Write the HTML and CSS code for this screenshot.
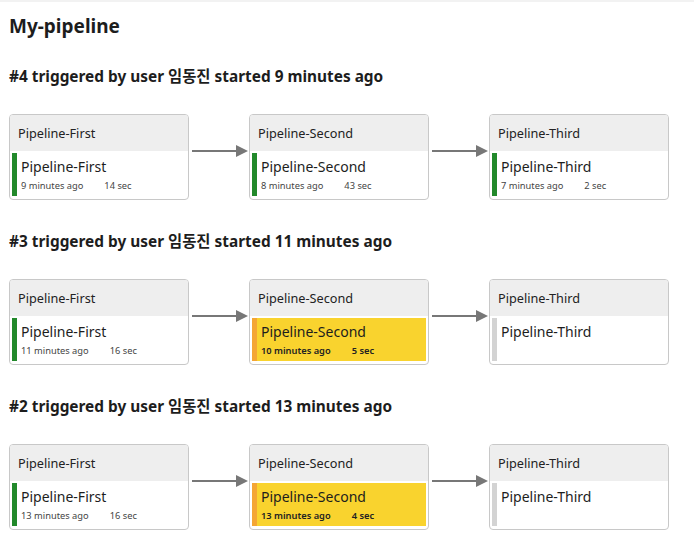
FILE: index.html
```html
<!DOCTYPE html>
<html>
<head>
<meta charset="utf-8">
<link rel="stylesheet" href="styles.css">
</head>
<body>
<div class="page">
  <h1 class="title">My-pipeline</h1>

  <section class="run">
    <h2 class="run-head">#4 triggered by user 임동진 started 9 minutes ago</h2>
    <div class="stages">
      <div class="stage">
        <div class="stage-head">Pipeline-First</div>
        <div class="stage-body"><div class="job ok"><span class="bar"></span><div class="info"><div class="name">Pipeline-First</div><div class="meta"><span>9 minutes ago</span><span class="dur">14 sec</span></div></div></div></div>
      </div>
      <div class="arrow"><svg width="57" height="14" viewBox="0 0 57 14"><line x1="0" y1="7" x2="46" y2="7" stroke="#777" stroke-width="2"/><polygon points="44,1 56,7 44,13" fill="#777"/></svg></div>
      <div class="stage">
        <div class="stage-head">Pipeline-Second</div>
        <div class="stage-body"><div class="job ok"><span class="bar"></span><div class="info"><div class="name">Pipeline-Second</div><div class="meta"><span>8 minutes ago</span><span class="dur">43 sec</span></div></div></div></div>
      </div>
      <div class="arrow"><svg width="57" height="14" viewBox="0 0 57 14"><line x1="0" y1="7" x2="46" y2="7" stroke="#777" stroke-width="2"/><polygon points="44,1 56,7 44,13" fill="#777"/></svg></div>
      <div class="stage">
        <div class="stage-head">Pipeline-Third</div>
        <div class="stage-body"><div class="job ok"><span class="bar"></span><div class="info"><div class="name">Pipeline-Third</div><div class="meta"><span>7 minutes ago</span><span class="dur">2 sec</span></div></div></div></div>
      </div>
    </div>
  </section>

  <section class="run">
    <h2 class="run-head">#3 triggered by user 임동진 started 11 minutes ago</h2>
    <div class="stages">
      <div class="stage">
        <div class="stage-head">Pipeline-First</div>
        <div class="stage-body"><div class="job ok"><span class="bar"></span><div class="info"><div class="name">Pipeline-First</div><div class="meta"><span>11 minutes ago</span><span class="dur">16 sec</span></div></div></div></div>
      </div>
      <div class="arrow"><svg width="57" height="14" viewBox="0 0 57 14"><line x1="0" y1="7" x2="46" y2="7" stroke="#777" stroke-width="2"/><polygon points="44,1 56,7 44,13" fill="#777"/></svg></div>
      <div class="stage">
        <div class="stage-head">Pipeline-Second</div>
        <div class="stage-body"><div class="job warn"><span class="bar"></span><div class="info"><div class="name">Pipeline-Second</div><div class="meta"><span>10 minutes ago</span><span class="dur">5 sec</span></div></div></div></div>
      </div>
      <div class="arrow"><svg width="57" height="14" viewBox="0 0 57 14"><line x1="0" y1="7" x2="46" y2="7" stroke="#777" stroke-width="2"/><polygon points="44,1 56,7 44,13" fill="#777"/></svg></div>
      <div class="stage">
        <div class="stage-head">Pipeline-Third</div>
        <div class="stage-body"><div class="job none"><span class="bar"></span><div class="info"><div class="name">Pipeline-Third</div></div></div></div>
      </div>
    </div>
  </section>

  <section class="run">
    <h2 class="run-head">#2 triggered by user 임동진 started 13 minutes ago</h2>
    <div class="stages">
      <div class="stage">
        <div class="stage-head">Pipeline-First</div>
        <div class="stage-body"><div class="job ok"><span class="bar"></span><div class="info"><div class="name">Pipeline-First</div><div class="meta"><span>13 minutes ago</span><span class="dur">16 sec</span></div></div></div></div>
      </div>
      <div class="arrow"><svg width="57" height="14" viewBox="0 0 57 14"><line x1="0" y1="7" x2="46" y2="7" stroke="#777" stroke-width="2"/><polygon points="44,1 56,7 44,13" fill="#777"/></svg></div>
      <div class="stage">
        <div class="stage-head">Pipeline-Second</div>
        <div class="stage-body"><div class="job warn"><span class="bar"></span><div class="info"><div class="name">Pipeline-Second</div><div class="meta"><span>13 minutes ago</span><span class="dur">4 sec</span></div></div></div></div>
      </div>
      <div class="arrow"><svg width="57" height="14" viewBox="0 0 57 14"><line x1="0" y1="7" x2="46" y2="7" stroke="#777" stroke-width="2"/><polygon points="44,1 56,7 44,13" fill="#777"/></svg></div>
      <div class="stage">
        <div class="stage-head">Pipeline-Third</div>
        <div class="stage-body"><div class="job none"><span class="bar"></span><div class="info"><div class="name">Pipeline-Third</div></div></div></div>
      </div>
    </div>
  </section>
</div>
</body>
</html>
```

FILE: styles.css
```css
html, body {
  margin: 0;
  padding: 0;
  background: #ffffff;
}
body {
  font-family: "Noto Sans", "Noto Sans CJK KR", sans-serif;
  color: #222;
}
.page {
  border-top: 2px solid #f2f2f2;
  padding: 10px 9px 0 9px;
}
.title {
  margin: 0;
  font-size: 19px;
  font-weight: 700;
  line-height: 28px;
  color: #1d1d1d;
}
.run-head {
  margin: 27px 0 27px 0;
  font-size: 15.4px;
  font-weight: 700;
  line-height: 20px;
  color: #1d1d1d;
}
.run + .run .run-head {
  margin-top: 32px;
}
.stages {
  display: flex;
  align-items: flex-start;
}
.stage {
  width: 178px;
  border: 1px solid #c8c8c8;
  border-radius: 4px;
  overflow: hidden;
  background: #fff;
}
.stage-head {
  height: 36px;
  background: #eeeeee;
  font-size: 12.7px;
  line-height: 37px;
  padding-left: 8px;
  color: #222;
}
.stage-body {
  padding: 2px 2px 3px 2px;
  height: 43px;
}
.job {
  display: flex;
  height: 43px;
}
.job .bar {
  width: 5px;
  flex: none;
}
.job.ok .bar { background: #22892b; }
.job.warn { background: #f9d32e; }
.job.warn .bar { background: #f4a634; }
.job.none .bar { background: #d3d3d3; }
.info {
  padding-left: 4px;
}
.name {
  font-size: 14px;
  line-height: 18px;
  margin-top: 5px;
  color: #1d1d1d;
}
.meta {
  font-size: 9.3px;
  line-height: 12px;
  margin-top: 4px;
  color: #444;
  display: flex;
}
.job.warn .meta {
  color: #222;
  font-weight: 600;
}
.dur {
  margin-left: 21px;
}
.arrow {
  width: 60px;
  padding-left: 3px;
  margin-top: 30px;
  box-sizing: border-box;
  line-height: 0;
}
```
